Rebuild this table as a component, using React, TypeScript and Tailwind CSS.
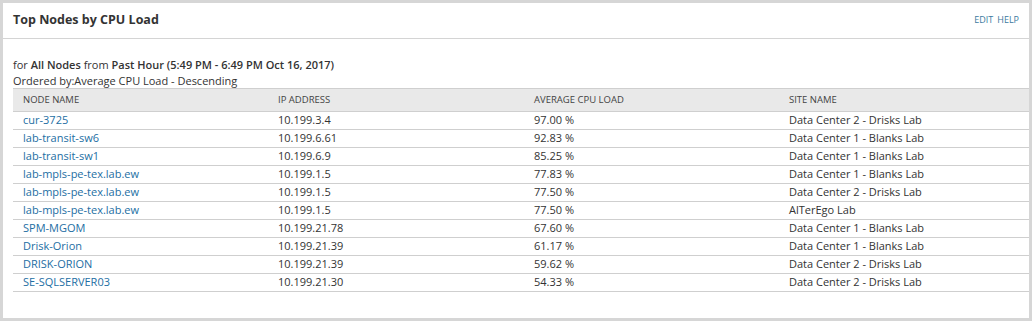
import React from "react";

const rows = [
  ["cur-3725", "10.199.3.4", "97.00 %", "Data Center 2 - Drisks Lab"],
  ["lab-transit-sw6", "10.199.6.61", "92.83 %", "Data Center 1 - Blanks Lab"],
  ["lab-transit-sw1", "10.199.6.9", "85.25 %", "Data Center 1 - Blanks Lab"],
  ["lab-mpls-pe-tex.lab.ew", "10.199.1.5", "77.83 %", "Data Center 1 - Blanks Lab"],
  ["lab-mpls-pe-tex.lab.ew", "10.199.1.5", "77.50 %", "Data Center 2 - Drisks Lab"],
  ["lab-mpls-pe-tex.lab.ew", "10.199.1.5", "77.50 %", "AlTerEgo Lab"],
  ["SPM-MGOM", "10.199.21.78", "67.60 %", "Data Center 1 - Blanks Lab"],
  ["Drisk-Orion", "10.199.21.39", "61.17 %", "Data Center 1 - Blanks Lab"],
  ["DRISK-ORION", "10.199.21.39", "59.62 %", "Data Center 2 - Drisks Lab"],
  ["SE-SQLSERVER03", "10.199.21.30", "54.33 %", "Data Center 2 - Drisks Lab"],
];

export default function App() {
  return (
    <div
      className="w-[1032px] h-[321px] bg-[#d6d6d6] p-[3px]"
      style={{ fontFamily: '"Open Sans", sans-serif' }}
    >
      <div className="h-[315px] bg-white flex flex-col">
        <div className="h-[36px] flex items-center justify-between border-b border-[#d4d4d4] pl-[10px] pr-[10px] shrink-0">
          <div className="text-[12.5px] font-bold text-[#333] leading-none">Top Nodes by CPU Load</div>
          <div className="flex gap-[4px] text-[9px] text-[#3d7aa0] leading-none self-start mt-[12px]">
            <span>EDIT</span>
            <span>HELP</span>
          </div>
        </div>
        <div className="pl-[10px] pt-[18px]">
          <div className="text-[11px] text-[#333] leading-[16px]">
            for <span className="font-semibold">All Nodes</span> from{" "}
            <span className="font-semibold">Past Hour (5:49 PM - 6:49 PM Oct 16, 2017)</span>
          </div>
          <div className="text-[11px] text-[#333] leading-[15px]">Ordered by:Average CPU Load - Descending</div>
          <div className="grid grid-cols-[255px_256px_255px_1fr] bg-[#e9e9e9] border-t border-b border-[#cfcfcf] h-[24px] items-center text-[9.5px] text-[#444]">
            <div className="pl-[10px]">NODE NAME</div>
            <div className="pl-[10px]">IP ADDRESS</div>
            <div className="pl-[10px]">AVERAGE CPU LOAD</div>
            <div className="pl-[10px]">SITE NAME</div>
          </div>
          {rows.map((r, i) => (
            <div
              key={i}
              className="grid grid-cols-[255px_256px_255px_1fr] border-b border-[#cfcfcf] h-[18px] items-center text-[11px] text-[#333]"
            >
              <div className="pl-[10px] text-[#236ea3]">{r[0]}</div>
              <div className="pl-[10px]">{r[1]}</div>
              <div className="pl-[10px]">{r[2]}</div>
              <div className="pl-[10px]">{r[3]}</div>
            </div>
          ))}
        </div>
      </div>
    </div>
  );
}
